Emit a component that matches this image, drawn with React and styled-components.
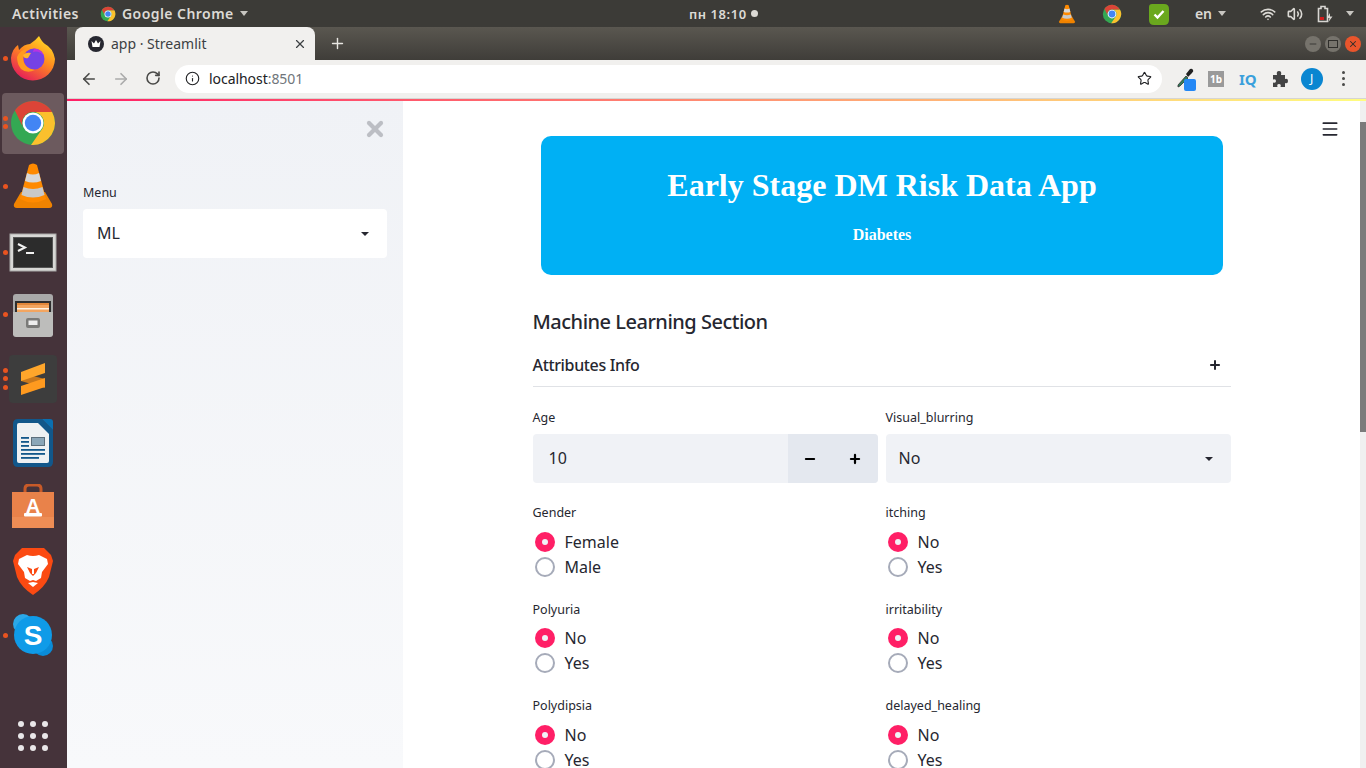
import React from 'react';
import styled, { createGlobalStyle } from 'styled-components';
import { ArrowLeft, ArrowRight, RotateCw, Info, Star, X, Plus, Minus, Wifi, Volume2, Menu as MenuIcon } from 'lucide-react';

const UI_FONT = '"Noto Sans", Roboto, sans-serif';
const DESK_FONT = '"Noto Sans", "Open Sans", sans-serif';

const GlobalStyle = createGlobalStyle`
  html, body {
    margin: 0;
    padding: 0;
    height: 768px;
    overflow: hidden;
    background: #fff;
  }
  * { box-sizing: border-box; }
`;

// ---------- icons ----------

const ChromeLogo = ({ size = 24 }) => (
  <svg width={size} height={size} viewBox="0 0 48 48">
    <circle cx="24" cy="24" r="22" fill="#34a853" />
    <path d="M43.05 13A22 22 0 0 1 22 45.9L33.5 29.5A11 11 0 0 0 24 13Z" fill="#fbc02d" />
    <path d="M24 13H43.05A22 22 0 0 0 5.9 11.4L14.5 29.5A11 11 0 0 1 24 13Z" fill="#db4437" />
    <circle cx="24" cy="24" r="10.5" fill="#fff" />
    <circle cx="24" cy="24" r="8.2" fill="#4285f4" />
  </svg>
);

const VlcLogo = ({ size = 24 }) => (
  <svg width={size} height={size} viewBox="0 0 48 48">
    <path d="M5 42L12 30H36L43 42Q44 46 40 46H8Q4 46 5 42Z" fill="#f08300" />
    <path d="M20 3Q24 0 28 3L37 37Q24 44 11 37Z" fill="#ff8a00" />
    <path d="M18 11Q24 14 30 11L32 19Q24 22 16 19Z" fill="#d8d8d8" />
    <path d="M14.5 25Q24 29 33.5 25L35.5 33Q24 38 12.5 33Z" fill="#c9c9c9" />
  </svg>
);

const FirefoxLogo = () => (
  <svg width="48" height="48" viewBox="0 0 48 48">
    <defs>
      <linearGradient id="ffOuter" x1="0.8" y1="0" x2="0.2" y2="1">
        <stop offset="0" stopColor="#ffe226" />
        <stop offset="0.45" stopColor="#ff8a1e" />
        <stop offset="1" stopColor="#e3145f" />
      </linearGradient>
    </defs>
    <path d="M2 23Q3 14 9 10L10 15Q15 9 21 9Q27 5 30 1Q33 7 36 9Q44 13 46 24A22 22 0 0 1 2 23Z" fill="url(#ffOuter)" />
    <circle cx="25" cy="24" r="10.5" fill="#7542e5" />
    <path d="M25 13.5A10.5 10.5 0 0 1 35 21Q30 15 24 17Z" fill="#b833e1" />
    <path d="M8 22Q12 13 21 14Q15 16 14 22Q14 33 26 35Q18 39 12 34Q8 29 8 22Z" fill="#ff9a1f" />
    <path d="M14 20Q17 17 22 18L19 23Q15 24 14 20Z" fill="#ffb52a" />
  </svg>
);

const TerminalLogo = () => (
  <svg width="48" height="40" viewBox="0 0 48 40">
    <rect x="1" y="1" width="46" height="37" fill="#d8d8d6" stroke="#a9a9a7" />
    <rect x="4.5" y="4.5" width="39" height="30" fill="#2c2c2c" stroke="#555" />
    <polyline points="9,11 16,14.5 9,18" fill="none" stroke="#f2f2f2" strokeWidth="2" />
    <line x1="17" y1="20" x2="25" y2="20" stroke="#f2f2f2" strokeWidth="2" />
  </svg>
);

const FilesLogo = () => (
  <svg width="44" height="44" viewBox="0 0 44 44">
    <path d="M2 4Q2 1 5 1H39Q42 1 42 4V42H2Z" fill="#a9a9a9" />
    <rect x="4" y="8" width="36" height="13" fill="#2e2e2e" />
    <rect x="6" y="10" width="32" height="3" fill="#e2873a" />
    <rect x="6" y="12" width="32" height="8" fill="#f2a560" />
    <rect x="6" y="15" width="32" height="1.5" fill="#fff2e2" />
    <path d="M2 19H42V41Q42 44 39 44H5Q2 44 2 41Z" fill="#bdbdbb" />
    <rect x="15" y="25" width="14" height="10" rx="2" fill="#7a7a78" />
    <rect x="17.5" y="27.5" width="9" height="4.5" fill="#eee" />
  </svg>
);

const SublimeLogo = () => (
  <svg width="48" height="48" viewBox="0 0 48 48">
    <rect width="48" height="48" rx="4" fill="#3d3d3d" />
    <path d="M12 18L36 24V33L12 26Z" fill="#c9781c" />
    <path d="M12 31L36 23V32L12 40Z" fill="#ff9a1f" />
    <path d="M12 17L36 8V18L12 26Z" fill="#ffa62b" />
  </svg>
);

const WriterLogo = () => (
  <svg width="40" height="48" viewBox="0 0 40 48">
    <path d="M0 5Q0 0 5 0H29L40 11V43Q40 48 35 48H5Q0 48 0 43Z" fill="#12578a" />
    <path d="M29 0H37Q40 0 40 3V11Z" fill="#0b6fb0" />
    <path d="M4 6Q4 4 6 4H25L36 15V42Q36 44 34 44H6Q4 44 4 42Z" fill="#eef1f3" />
    <rect x="18" y="18" width="14" height="9" fill="#5c6f7c" />
    <rect x="19" y="19" width="12" height="7" fill="#8aa6b8" />
    <rect x="8" y="18" width="8" height="1.8" fill="#12578a" />
    <rect x="8" y="22" width="8" height="1.8" fill="#12578a" />
    <rect x="8" y="26" width="8" height="1.8" fill="#12578a" />
    <rect x="8" y="30" width="24" height="1.8" fill="#12578a" />
    <rect x="8" y="34" width="24" height="1.8" fill="#12578a" />
    <rect x="8" y="38" width="18" height="1.8" fill="#12578a" />
  </svg>
);

const StoreLogo = () => (
  <svg width="42" height="44" viewBox="0 0 42 44">
    <path d="M13 11V5Q13 1 17 1H25Q29 1 29 5V11" fill="none" stroke="#c85a28" strokeWidth="3" />
    <path d="M0 8H42V44H0Z" fill="#e9824a" />
    <path d="M0 33H42V44H0Z" fill="#ee8d55" />
    <text x="21" y="29" textAnchor="middle" fontFamily="Liberation Sans" fontWeight="700" fontSize="20" fill="#fff">A</text>
    <rect x="12" y="29" width="18" height="3.5" rx="1" fill="#fff" />
  </svg>
);

const BraveLogo = () => (
  <svg width="40" height="48" viewBox="0 0 40 48">
    <path d="M9 1H31L38 8L40 14L36 30Q32 40 20 48Q8 40 4 30L0 14L2 8Z" fill="#fb4a12" />
    <path d="M6 12L14 8Q20 10 26 8L34 12L35 17L29 25L28 31L23 34L20 33L17 34L12 31L11 25L5 17Z" fill="#fff" />
    <path d="M14 20L19 22V27H21V22L26 20L23 26L20 29L17 26Z" fill="#fb4a12" />
    <path d="M15 36L20 35L25 36L20 40Z" fill="#fff" />
  </svg>
);

const SkypeLogo = () => (
  <svg width="42" height="44" viewBox="0 0 42 44">
    <circle cx="11" cy="11" r="10" fill="#2ba8e8" />
    <circle cx="31" cy="33" r="10" fill="#0a8cd8" />
    <circle cx="21" cy="22" r="19" fill="#0f9be8" />
    <text x="21" y="32" textAnchor="middle" fontFamily="Liberation Sans" fontWeight="700" fontSize="28" fill="#fff">S</text>
  </svg>
);

const DockGrid = () => (
  <svg width="32" height="32" viewBox="0 0 32 32" fill="#e9e7e8">
    {[4, 16, 28].map((y) => [4, 16, 28].map((x) => <circle key={`${x}-${y}`} cx={x} cy={y} r="3" />))}
  </svg>
);

const StreamlitFavicon = () => (
  <svg width="16" height="16" viewBox="0 0 16 16">
    <circle cx="8" cy="8" r="8" fill="#262730" />
    <path d="M3.5 5L6 7.5L8 4L10 7.5L12.5 5L11.5 11H4.5Z" fill="#fff" />
  </svg>
);

const Dropper = () => (
  <svg width="26" height="28" viewBox="0 0 26 28">
    <path d="M4 20L12 11L14 13L6 21L4 22Z" fill="#2f7d5b" stroke="#333" strokeWidth="0.8" />
    <path d="M12 9L16 4Q18 3 19 5Q20 6 18 8L14 12Z" fill="#222" />
    <rect x="10" y="14" width="12" height="12" rx="2" fill="#2488f5" />
  </svg>
);

const PuzzleSolid = () => (
  <svg width="16" height="16" viewBox="0 0 16 16" fill="#444">
    <path d="M1 4H5Q4 0 7 0Q10 0 9 4H13V8Q16 7 16 10Q16 13 13 12V16H8.5Q9.5 13 7 13Q4.5 13 5.5 16H1V11.5Q4 12.5 4 10Q4 7.5 1 8.5Z" />
  </svg>
);

const Battery = () => (
  <svg width="16" height="18" viewBox="0 0 16 18">
    <path d="M1.5 3.5H4V1.5H8V3.5H10.5V16.5H1.5Z" fill="none" stroke="#d8d6d2" strokeWidth="1.6" />
    <rect x="3" y="12" width="4" height="3" fill="#d01c1c" />
    <path d="M13 8L10 13H12.5L11.5 17L15.5 11.5H13Z" fill="#d8d6d2" />
  </svg>
);

const GreenCheck = () => (
  <svg width="22" height="22" viewBox="0 0 22 22">
    <path d="M4 1H16Q21 1 21 6V17Q21 22 16 22H6Q1 22 1 17V4Q1 1 4 1Z" fill="#6aa81e" />
    <polyline points="6.5,11.5 9.5,14.5 15.5,8" fill="none" stroke="#fff" strokeWidth="2.4" />
  </svg>
);

// ---------- desktop top bar ----------

const Screen = styled.div`
  width: 1366px;
  height: 768px;
  overflow: hidden;
  display: flex;
  flex-direction: column;
  font-family: ${UI_FONT};
`;

const TopBar = styled.header`
  height: 27px;
  flex: none;
  display: flex;
  align-items: center;
  background: #3c3b37;
  color: #dcdad5;
  font-family: ${DESK_FONT};
  font-size: 14px;
  font-weight: 600;
`;

const BarLeft = styled.div`
  width: 689px;
  flex: none;
  display: flex;
  align-items: center;
  padding-left: 12px;
  letter-spacing: 0.45px;
`;

const AppName = styled.div`
  display: flex;
  align-items: center;
  gap: 6px;
  margin-left: 21px;
`;

const Caret = styled.span`
  width: 0;
  height: 0;
  margin-left: ${(p) => p.$gap || 0}px;
  border-left: 4.5px solid transparent;
  border-right: 4.5px solid transparent;
  border-top: 5px solid ${(p) => p.$color || '#c8c6c1'};
`;

const Clock = styled.div`
  display: flex;
  align-items: center;
  gap: 4px;
  font-size: 13px;
  letter-spacing: 0.55px;
`;

const ClockDot = styled.span`
  width: 7px;
  height: 7px;
  border-radius: 50%;
  background: #dcdad5;
`;

const Tray = styled.div`
  margin-left: auto;
  display: flex;
  align-items: center;
  padding-right: 12px;
`;

const TraySlot = styled.div`
  margin-left: ${(p) => p.$left}px;
  display: flex;
  align-items: center;
`;

// ---------- dock ----------

const Body = styled.div`
  flex: 1;
  min-height: 0;
  display: flex;
`;

const Dock = styled.nav`
  width: 67px;
  flex: none;
  display: flex;
  flex-direction: column;
  background: #45333a;
`;

const DockItem = styled.div`
  position: relative;
  height: 63.8px;
  flex: none;
  display: flex;
  align-items: center;
  justify-content: center;
  padding: ${(p) => p.$nudge || 0}px 1px 0 0;
  &::before {
    content: '';
    display: ${(p) => (p.$active ? 'block' : 'none')};
    position: absolute;
    left: 2px;
    right: 3px;
    top: 2px;
    bottom: 1px;
    border-radius: 4px;
    background: #6c5a5e;
  }
  > svg { position: relative; }
`;

const Pips = styled.div`
  position: absolute;
  left: 3px;
  top: ${(p) => p.$nudge || 0}px;
  bottom: 0;
  display: flex;
  flex-direction: column;
  justify-content: center;
  gap: 3.5px;
  z-index: 1;
`;

const Pip = styled.span`
  width: 5px;
  height: 5px;
  border-radius: 50%;
  background: #e95420;
`;

const DockBottom = styled.div`
  margin-top: auto;
  height: 64px;
  display: flex;
  align-items: center;
  justify-content: center;
  padding-right: 1px;
`;

// ---------- browser chrome ----------

const Browser = styled.div`
  flex: 1;
  min-width: 0;
  display: flex;
  flex-direction: column;
`;

const TabStrip = styled.div`
  height: 33px;
  flex: none;
  display: flex;
  align-items: flex-end;
  padding-left: 8px;
  background: linear-gradient(180deg, #5a5750, #3f3d39);
`;

const Tab = styled.div`
  width: 240px;
  height: 33px;
  display: flex;
  align-items: center;
  padding: 0 8px 0 13px;
  border-radius: 8px 8px 0 0;
  background: #f1f0ee;
  color: #3c4043;
  font-size: 14px;
`;

const TabTitle = styled.span`
  flex: 1;
  margin-left: 7px;
`;

const NewTab = styled.div`
  width: 44px;
  height: 33px;
  display: flex;
  align-items: center;
  justify-content: center;
  color: #e8e6e2;
`;

const WindowButtons = styled.div`
  margin-left: auto;
  height: 33px;
  display: flex;
  align-items: center;
  gap: 4px;
  padding: 1px 5px 0 0;
`;

const WindowButton = styled.span`
  width: 16px;
  height: 16px;
  border-radius: 50%;
  display: flex;
  align-items: center;
  justify-content: center;
  background: ${(p) => (p.$close ? '#e9552c' : '#76736c')};
  color: #2f2e2b;
`;

const Toolbar = styled.div`
  height: 39px;
  flex: none;
  display: flex;
  align-items: center;
  padding-bottom: 1px;
  background: #f1f0ee;
  border-bottom: 1px solid #d6d5d2;
  color: #4a4a48;
`;

const NavButton = styled.span`
  width: 32px;
  display: flex;
  justify-content: center;
  color: ${(p) => (p.$off ? '#aaa' : '#4a4a48')};
`;

const NavGroup = styled.div`
  display: flex;
  padding-left: 6px;
  margin-right: 6px;
`;

const Omnibox = styled.div`
  width: 987px;
  height: 28px;
  display: flex;
  align-items: center;
  padding: 0 10px 0 10px;
  border-radius: 14px;
  background: #fff;
  font-size: 14px;
  color: #202124;
`;

const UrlText = styled.span`
  flex: 1;
  margin-left: 9px;
  letter-spacing: -0.05px;
`;

const UrlPort = styled.span`
  color: #70757a;
`;

const Extensions = styled.div`
  flex: 1;
  display: flex;
  align-items: center;
`;

const ExtSlot = styled.span`
  display: flex;
  align-items: center;
  justify-content: center;
  margin-left: ${(p) => p.$left}px;
`;

const TbBadge = styled.span`
  width: 16px;
  height: 16px;
  display: flex;
  align-items: center;
  justify-content: center;
  background: #9a9a9a;
  color: #fff;
  font-size: 10px;
  font-weight: 700;
`;

const IqBadge = styled.span`
  color: #3aa0dc;
  font-size: 15px;
  font-weight: 700;
`;

const Avatar = styled.span`
  width: 22px;
  height: 22px;
  border-radius: 50%;
  display: flex;
  align-items: center;
  justify-content: center;
  background: #0a86d1;
  color: #fff;
  font-size: 12px;
`;

const Kebab = styled.span`
  display: flex;
  flex-direction: column;
  gap: 3px;
  > i {
    width: 3px;
    height: 3px;
    border-radius: 50%;
    background: #4a4a48;
  }
`;

const Decoration = styled.div`
  height: 2px;
  flex: none;
  background: linear-gradient(90deg, #ff1f66, #fffd80);
`;

// ---------- streamlit page ----------

const Page = styled.div`
  flex: 1;
  min-height: 0;
  display: flex;
`;

const Sidebar = styled.aside`
  width: 336px;
  flex: none;
  display: flex;
  flex-direction: column;
  padding: 0 16px;
  background: linear-gradient(180deg, #f0f2f6, #f8f9fb);
`;

const SidebarClose = styled.div`
  height: 42px;
  padding-top: 16px;
  display: flex;
  justify-content: flex-end;
  color: #bcbec4;
`;

const SidebarMenu = styled.div`
  margin-top: 40px;
`;

const Main = styled.main`
  position: relative;
  flex: 1;
  min-width: 0;
  display: flex;
  justify-content: center;
  padding-top: 35px;
  background: #fff;
  color: #262730;
`;

const Hamburger = styled.div`
  position: absolute;
  top: 18px;
  right: 20px;
  display: flex;
  color: #262730;
`;

const Block = styled.div`
  width: 698px;
`;

const Banner = styled.div`
  height: 139px;
  margin: 0 8px 32px;
  padding: 28px 0 0 1px;
  border-radius: 10px;
  background: #00b0f4;
  color: #fff;
  font-family: "Liberation Serif", serif;
  font-weight: 700;
  text-align: center;
`;

const BannerTitle = styled.h1`
  margin: 0;
  font-size: 32px;
  line-height: 42px;
  font-weight: 700;
`;

const BannerSub = styled.h4`
  margin: 19px 0 0;
  font-size: 16px;
  line-height: 20px;
  font-weight: 700;
`;

const SectionTitle = styled.h3`
  margin: 0;
  font-size: 20px;
  line-height: 30px;
  font-weight: 500;
  letter-spacing: -0.5px;
`;

const Expander = styled.div`
  height: 43px;
  margin-top: 7px;
  display: flex;
  align-items: center;
  justify-content: space-between;
  padding-right: 9px;
  border-bottom: 1px solid #e0e2e6;
  font-size: 16px;
  font-weight: 500;
  letter-spacing: -0.35px;
`;

const FormGrid = styled.div`
  display: grid;
  grid-template-columns: 345px 345px;
  column-gap: 8px;
  row-gap: 20px;
  margin-top: 21px;
`;

const Field = styled.div`
  min-width: 0;
`;

const Label = styled.div`
  height: 18px;
  margin-bottom: 8px;
  font-size: 12.5px;
  line-height: 20px;
  color: #262730;
`;

const Box = styled.div`
  height: 49px;
  display: flex;
  align-items: center;
  border-radius: 4px;
  overflow: hidden;
  font-size: 16px;
  background: ${(p) => (p.$white ? '#fff' : '#f0f2f6')};
  color: #262730;
`;

const BoxValue = styled.span`
  flex: 1;
  padding-left: ${(p) => p.$pad}px;
  margin-top: -1px;
`;

const SelectCaret = styled.span`
  margin-right: 18px;
  width: 0;
  height: 0;
  border-left: 4px solid transparent;
  border-right: 4px solid transparent;
  border-top: 4px solid #262730;
`;

const Stepper = styled.div`
  width: 90px;
  height: 100%;
  display: flex;
  background: #e4e8ef;
`;

const StepButton = styled.span`
  flex: 1;
  display: flex;
  align-items: center;
  justify-content: center;
  color: #000;
`;

const RadioList = styled.div`
  padding: 0.25px 0;
`;

const RadioRow = styled.div`
  height: 25px;
  display: flex;
  align-items: center;
  gap: 10px;
  padding-left: 2px;
  font-size: 16px;
`;

const RadioMark = styled.span`
  width: 20px;
  height: 20px;
  flex: none;
  border-radius: 50%;
  display: flex;
  align-items: center;
  justify-content: center;
  background: ${(p) => (p.$on ? '#ff1f66' : '#fff')};
  border: ${(p) => (p.$on ? 'none' : '2px solid #a6abb9')};
  &::after {
    content: '';
    display: ${(p) => (p.$on ? 'block' : 'none')};
    width: 6px;
    height: 6px;
    border-radius: 50%;
    background: #f0f2f6;
  }
`;

const ScrollTrack = styled.div`
  width: 6px;
  flex: none;
  padding-top: 21px;
  background: #f0f0f0;
`;

const ScrollThumb = styled.div`
  height: 310px;
  background: #7b7b7b;
`;

const dockApps = [
  { icon: <FirefoxLogo />, pips: 1 },
  { icon: <ChromeLogo size={48} />, pips: 2, active: true },
  { icon: <VlcLogo size={48} />, pips: 1 },
  { icon: <TerminalLogo />, pips: 1, nudge: 5 },
  { icon: <FilesLogo />, pips: 1, nudge: 1 },
  { icon: <SublimeLogo />, pips: 3, nudge: 2 },
  { icon: <WriterLogo />, pips: 0, nudge: 3 },
  { icon: <StoreLogo />, pips: 0, nudge: 2 },
  { icon: <BraveLogo />, pips: 0, nudge: 4 },
  { icon: <SkypeLogo />, pips: 1, nudge: 4 },
];

const radioFields = [
  { label: 'Gender', options: ['Female', 'Male'] },
  { label: 'itching', options: ['No', 'Yes'] },
  { label: 'Polyuria', options: ['No', 'Yes'] },
  { label: 'irritability', options: ['No', 'Yes'] },
  { label: 'Polydipsia', options: ['No', 'Yes'] },
  { label: 'delayed_healing', options: ['No', 'Yes'] },
];

export default function App() {
  return (
    <Screen>
      <GlobalStyle />
      <TopBar>
        <BarLeft>
          Activities
          <AppName>
            <ChromeLogo size={16} />
            Google Chrome
            <Caret />
          </AppName>
        </BarLeft>
        <Clock>
          пн 18:10
          <ClockDot />
        </Clock>
        <Tray>
          <TraySlot $left={0}><VlcLogo size={20} /></TraySlot>
          <TraySlot $left={25}><ChromeLogo size={20} /></TraySlot>
          <TraySlot $left={26}><GreenCheck /></TraySlot>
          <TraySlot $left={25}>en<Caret $gap={6} /></TraySlot>
          <TraySlot $left={34}><Wifi size={16} strokeWidth={2.4} /></TraySlot>
          <TraySlot $left={11}><Volume2 size={16} strokeWidth={2.4} /></TraySlot>
          <TraySlot $left={14}><Battery /></TraySlot>
          <TraySlot $left={13}><Caret /></TraySlot>
        </Tray>
      </TopBar>

      <Body>
        <Dock>
          {dockApps.map((app, i) => (
            <DockItem key={i} $active={app.active} $nudge={app.nudge}>
              {app.pips > 0 && (
                <Pips $nudge={app.nudge}>
                  {Array.from({ length: app.pips }).map((_, j) => <Pip key={j} />)}
                </Pips>
              )}
              {app.icon}
            </DockItem>
          ))}
          <DockBottom><DockGrid /></DockBottom>
        </Dock>

        <Browser>
          <TabStrip>
            <Tab>
              <StreamlitFavicon />
              <TabTitle>app · Streamlit</TabTitle>
              <X size={14} />
            </Tab>
            <NewTab><Plus size={17} strokeWidth={2} /></NewTab>
            <WindowButtons>
              <WindowButton><Minus size={10} strokeWidth={2} /></WindowButton>
              <WindowButton><svg width="10" height="8"><rect x="0.5" y="0.5" width="9" height="7" fill="none" stroke="#2f2e2b" /></svg></WindowButton>
              <WindowButton $close><X size={10} strokeWidth={2.5} /></WindowButton>
            </WindowButtons>
          </TabStrip>

          <Toolbar>
            <NavGroup>
              <NavButton><ArrowLeft size={18} strokeWidth={2.2} /></NavButton>
              <NavButton $off><ArrowRight size={18} strokeWidth={2.2} /></NavButton>
              <NavButton><RotateCw size={16} strokeWidth={2.4} /></NavButton>
            </NavGroup>
            <Omnibox>
              <Info size={15} strokeWidth={1.8} />
              <UrlText>localhost<UrlPort>:8501</UrlPort></UrlText>
              <Star size={15} strokeWidth={1.8} />
            </Omnibox>
            <Extensions>
              <ExtSlot $left={12}><Dropper /></ExtSlot>
              <ExtSlot $left={8}><TbBadge>1b</TbBadge></ExtSlot>
              <ExtSlot $left={15}><IqBadge>IQ</IqBadge></ExtSlot>
              <ExtSlot $left={15}><PuzzleSolid /></ExtSlot>
              <ExtSlot $left={13}><Avatar>J</Avatar></ExtSlot>
              <ExtSlot $left={19}><Kebab><i /><i /><i /></Kebab></ExtSlot>
            </Extensions>
          </Toolbar>

          <Decoration />

          <Page>
            <Sidebar>
              <SidebarClose><X size={24} strokeWidth={4.2} /></SidebarClose>
              <SidebarMenu>
                <Label>Menu</Label>
                <Box $white>
                  <BoxValue $pad={14}>ML</BoxValue>
                  <SelectCaret />
                </Box>
              </SidebarMenu>
            </Sidebar>

            <Main>
              <Hamburger><MenuIcon size={20} strokeWidth={2} /></Hamburger>
              <Block>
                <Banner>
                  <BannerTitle>Early Stage DM Risk Data App</BannerTitle>
                  <BannerSub>Diabetes</BannerSub>
                </Banner>
                <SectionTitle>Machine Learning Section</SectionTitle>
                <Expander>
                  Attributes Info
                  <Plus size={14} strokeWidth={3.4} />
                </Expander>
                <FormGrid>
                  <Field>
                    <Label>Age</Label>
                    <Box>
                      <BoxValue $pad={16}>10</BoxValue>
                      <Stepper>
                        <StepButton><Minus size={14} strokeWidth={3.8} /></StepButton>
                        <StepButton><Plus size={14} strokeWidth={3.8} /></StepButton>
                      </Stepper>
                    </Box>
                  </Field>
                  <Field>
                    <Label>Visual_blurring</Label>
                    <Box>
                      <BoxValue $pad={13}>No</BoxValue>
                      <SelectCaret />
                    </Box>
                  </Field>
                  {radioFields.map((field) => (
                    <Field key={field.label}>
                      <Label>{field.label}</Label>
                      <RadioList>
                        {field.options.map((option, i) => (
                          <RadioRow key={option}>
                            <RadioMark $on={i === 0} />
                            {option}
                          </RadioRow>
                        ))}
                      </RadioList>
                    </Field>
                  ))}
                </FormGrid>
              </Block>
            </Main>
            <ScrollTrack><ScrollThumb /></ScrollTrack>
          </Page>
        </Browser>
      </Body>
    </Screen>
  );
}
